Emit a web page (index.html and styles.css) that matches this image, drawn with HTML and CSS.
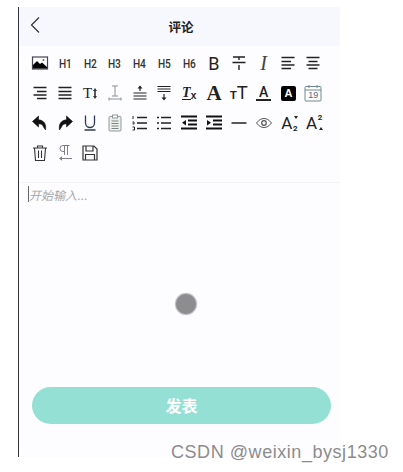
FILE: index.html
```html
<!DOCTYPE html>
<html lang="zh-CN">
<head>
    <meta charset="UTF-8">
    <meta name="viewport" content="width=device-width, initial-scale=1.0">
    <title>评论</title>
    <link rel="stylesheet" href="styles.css">
</head>
<body>
    <div class="phone">
        <div class="nav-bar">
            <svg class="nav-back" width="12" height="18" viewBox="0 0 12 18"><path d="M10 1.5 2.5 9l7.5 7.5" fill="none" stroke="#333" stroke-width="1.2"/></svg>
            <div class="nav-title">评论</div>
        </div>

        <div class="toolbar">
            <!-- Row 1 -->
            <div class="tool"><svg width="18" height="18" viewBox="0 0 18 18"><rect x="1.5" y="3" width="15" height="12" fill="#fff" stroke="#445" stroke-width="1.2"/><path d="M2 14.5V11l4-4 3 3 2-1.500 5 4.500v1.500z" fill="#000"/><circle cx="12.500" cy="6" r="1" fill="#667"/></svg></div>
            <div class="tool tool-h">H1</div>
            <div class="tool tool-h">H2</div>
            <div class="tool tool-h">H3</div>
            <div class="tool tool-h">H4</div>
            <div class="tool tool-h">H5</div>
            <div class="tool tool-h">H6</div>
            <div class="tool tool-b">B</div>
            <div class="tool"><svg width="18" height="18" viewBox="0 0 18 18"><path d="M3 3h12M9 3v3M2.5 8.5h13M9 11v5" fill="none" stroke="#222" stroke-width="1.4"/></svg></div>
            <div class="tool tool-i">I</div>
            <div class="tool"><svg width="18" height="18" viewBox="0 0 18 18"><path d="M2.5 3.5h13M2.5 7.5h9.5M2.5 11h13M2.5 14.5h9.5" fill="none" stroke="#222" stroke-width="1.5"/></svg></div>
            <div class="tool"><svg width="18" height="18" viewBox="0 0 18 18"><path d="M2.5 3.5h13M4.5 7.5h9M2.5 11h13M4.5 14.5h9" fill="none" stroke="#222" stroke-width="1.5"/></svg></div>

            <!-- Row 2 -->
            <div class="tool"><svg width="18" height="18" viewBox="0 0 18 18"><path d="M2.5 3.5h13M6 7.5h9.5M2.5 11h13M6 14.5h9.5" fill="none" stroke="#222" stroke-width="1.5"/></svg></div>
            <div class="tool"><svg width="18" height="18" viewBox="0 0 18 18"><path d="M2.5 3.5h13M2.5 7.5h13M2.5 11h13M2.5 14.5h13" fill="none" stroke="#222" stroke-width="1.5"/></svg></div>
            <div class="tool tool-size">T<svg width="4" height="11" viewBox="0 0 4 11"><path d="M2 0 4 3H2.800v5H4l-2 3-2-3h1.200V3H0z" fill="#333"/></svg></div>
            <div class="tool"><svg width="18" height="18" viewBox="0 0 18 18"><path d="M6 2h6M6 12h6M9 2v10M3 15h12M3 13.5V16.5M15 13.5V16.5" fill="none" stroke="#8a8f98" stroke-width="1"/></svg></div>
            <div class="tool"><svg width="18" height="18" viewBox="0 0 18 18"><path d="M9 7V2.5M2.5 9h13M2.5 12h13M2.5 15h13" fill="none" stroke="#222" stroke-width="1.2"/><path d="M6.5 4.5 9 1.5l2.500 3z" fill="#222"/></svg></div>
            <div class="tool"><svg width="18" height="18" viewBox="0 0 18 18"><path d="M2.5 2.5h13M2.5 5h13M2.5 7.5h13M9 10v5" fill="none" stroke="#222" stroke-width="1.2"/><path d="M6.5 13.5 9 16.5l2.500-3z" fill="#222"/></svg></div>
            <div class="tool tool-clear"><span class="tool-clear-t">T</span><span class="tool-clear-x">x</span></div>
            <div class="tool tool-serif">A</div>
            <div class="tool tool-tt"><span class="tool-tt-small">T</span>T</div>
            <div class="tool"><div class="tool-under">A</div></div>
            <div class="tool"><div class="tool-invert">A</div></div>
            <div class="tool"><svg width="18" height="18" viewBox="0 0 18 18"><rect x="1" y="2.5" width="16" height="14.5" rx="1" fill="#fff" stroke="#6f8a90" stroke-width="1"/><path d="M1 6h16M5 1v3M13 1v3" fill="none" stroke="#6f8a90" stroke-width="1"/></svg><span class="tool-date">19</span></div>

            <!-- Row 3 -->
            <div class="tool"><svg width="18" height="18" viewBox="0 0 18 18"><path d="M7.5 2 1.5 7.5l6 5.500V9.800c2.800 0 4.300 1.200 5 3.200l2 3c1-5.800-1.500-9.700-7-10.200z" fill="#111" stroke="#111" stroke-width=".6"/></svg></div>
            <div class="tool"><svg width="18" height="18" viewBox="0 0 18 18"><path d="M10.5 2l6 5.500-6 5.500V9.800c-2.800 0-4.300 1.200-5 3.200l-2 3c-1-5.800 1.500-9.700 7-10.200z" fill="#111" stroke="#111" stroke-width=".6"/></svg></div>
            <div class="tool"><svg width="18" height="18" viewBox="0 0 18 18"><path d="M4.5 1.5v7.500a4.500 4.500 0 0 0 9 0V1.5M3.5 16h11" fill="none" stroke="#2b3a55" stroke-width="1.3"/></svg></div>
            <div class="tool"><svg width="18" height="18" viewBox="0 0 18 18"><rect x="3" y="2.5" width="12" height="14.5" rx="1" fill="#eef0ee" stroke="#8f9a98" stroke-width="1"/><rect x="6.5" y="1" width="5" height="3" fill="#fff" stroke="#8f9a98" stroke-width="1"/><path d="M5.5 7h7M5.5 9.500h7M5.5 12h7M5.5 14.500h7" stroke="#7c8785" stroke-width="1"/></svg></div>
            <div class="tool"><svg width="18" height="18" viewBox="0 0 18 18"><path d="M6 3.5h10M6 9h10M6 14.5h10" fill="none" stroke="#222" stroke-width="1.5"/><path d="M2 2v3M1.500 8h1.500v2H1.500M1.500 13h2v3h-2" fill="none" stroke="#222" stroke-width="1"/></svg></div>
            <div class="tool"><svg width="18" height="18" viewBox="0 0 18 18"><path d="M6 3.5h10M6 9h10M6 14.5h10M2 3.5h2M2 9h2M2 14.5h2" fill="none" stroke="#222" stroke-width="1.5"/></svg></div>
            <div class="tool"><svg width="18" height="18" viewBox="0 0 18 18"><path d="M1 2.5h16M8 6.5h9M8 10.5h9M1 14.5h16" fill="none" stroke="#111" stroke-width="2.2"/><path d="M6 6v5.500L2 8.700z" fill="#111"/></svg></div>
            <div class="tool"><svg width="18" height="18" viewBox="0 0 18 18"><path d="M1 2.5h16M8 6.5h9M8 10.5h9M1 14.5h16" fill="none" stroke="#111" stroke-width="2.2"/><path d="M2 6v5.500l4-2.800z" fill="#111"/></svg></div>
            <div class="tool"><svg width="18" height="18" viewBox="0 0 18 18"><path d="M1.5 9h15" stroke="#222" stroke-width="1.5"/></svg></div>
            <div class="tool"><svg width="18" height="18" viewBox="0 0 18 18"><path d="M1.5 9C4 5.800 6.300 4.500 9 4.500s5 1.300 7.500 4.500C14 12.200 11.700 13.500 9 13.500S4 12.200 1.500 9z" fill="none" stroke="#555" stroke-width="1"/><circle cx="9" cy="9" r="2.3" fill="none" stroke="#555" stroke-width="1.2"/></svg></div>
            <div class="tool tool-script">A<span class="tool-sub">2</span><i class="tool-arrow-down"></i></div>
            <div class="tool tool-script">A<span class="tool-sup">2</span><i class="tool-arrow-up"></i></div>

            <!-- Row 4 -->
            <div class="tool"><svg width="18" height="18" viewBox="0 0 18 18"><path d="M2 4h14M6.500 4V2h5v2M3.500 4l1 12.500h9l1-12.500M7.500 6.500v7.500M10.500 6.500v7.500" fill="none" stroke="#333" stroke-width="1.1"/></svg></div>
            <div class="tool"><svg width="18" height="18" viewBox="0 0 18 18"><path d="M13.500 1.500H7a3 3 0 0 0 0 6h1.500M8.500 1.500V11M11.500 1.500V11M16 14.500H4" fill="none" stroke="#7c8288" stroke-width="1"/><path d="M6 12.300 3 14.500l3 2.200z" fill="#7c8288"/></svg></div>
            <div class="tool"><svg width="18" height="18" viewBox="0 0 18 18"><path d="M2 2h11l3 3v11H2zM5 2v5h7V2M4.500 16v-5.500h9V16" fill="none" stroke="#333" stroke-width="1.2"/></svg></div>
        </div>

        <div class="editor">
            <div class="editor-text"><span class="caret"></span>开始输入...</div>
        </div>
        <div class="touch-dot"></div>
        <button class="submit-btn">发表</button>
    </div>
    <div class="watermark">CSDN @weixin_bysj1330</div>
</body>
</html>
```

FILE: styles.css
```css
html, body {
    margin: 0;
    padding: 0;
    background: #fff;
}
body {
    font-family: "Noto Sans CJK SC", "Liberation Sans", sans-serif;
    width: 403px;
    height: 472px;
    overflow: hidden;
    position: relative;
}
.phone {
    position: relative;
    display: flex;
    flex-direction: column;
    box-sizing: border-box;
    width: 322px;
    height: 450px;
    margin: 7px 0 0 18px;
    border-left: 1px solid #33333d;
    background: #fdfdff;
}
.nav-bar {
    position: relative;
    display: flex;
    align-items: center;
    justify-content: center;
    height: 39px;
    padding-left: 3px;
    box-sizing: border-box;
    background: #f7f8fe;
}
.nav-back {
    position: absolute;
    left: 10px;
    top: 9px;
}
.nav-title {
    font-size: 12.5px;
    font-weight: 700;
    color: #222;
}
.toolbar {
    display: grid;
    grid-template-columns: repeat(12, 24.8px);
    grid-auto-rows: 30px;
    padding: 2px 0 14px 9px;
    border-bottom: 1px solid #f3f3f6;
}
.tool {
    position: relative;
    display: flex;
    align-items: center;
    justify-content: center;
    color: #222;
}
.tool-h {
    font-family: "Roboto", sans-serif;
    font-size: 13px;
    font-weight: 500;
    color: #333;
    transform: scaleX(0.78);
}
.tool-b {
    font-family: "Roboto", sans-serif;
    font-size: 18px;
    font-weight: 400;
}
.tool-i {
    font-family: "Liberation Serif", serif;
    font-size: 20px;
    font-style: italic;
    color: #444;
}
.tool-size {
    gap: 1px;
    font-family: "Liberation Serif", serif;
    font-size: 15px;
}
.tool-clear {
    font-family: "Liberation Serif", serif;
    font-size: 14px;
    font-weight: 700;
    font-style: italic;
}
.tool-clear-t {
    border-bottom: 1.5px solid #222;
    line-height: 12px;
}
.tool-clear-x {
    font-family: "Liberation Sans", sans-serif;
    font-size: 10px;
    font-style: normal;
    margin-top: 4px;
}
.tool-serif {
    font-family: "Liberation Serif", serif;
    font-size: 21px;
    font-weight: 700;
}
.tool-tt {
    align-items: flex-end;
    height: 18px;
    margin: auto 0;
    font-family: "Liberation Sans", sans-serif;
    font-size: 18px;
    line-height: 18px;
    font-weight: 400;
}
.tool-tt-small {
    font-size: 11px;
    font-weight: 700;
    line-height: 13px;
}
.tool-under {
    width: 15px;
    height: 14px;
    border-bottom: 2px solid #222;
    font-family: "Roboto", sans-serif;
    font-size: 14px;
    font-weight: 500;
    line-height: 14px;
    text-align: center;
}
.tool-invert {
    display: flex;
    align-items: center;
    justify-content: center;
    width: 15px;
    height: 15px;
    border-radius: 2px;
    background: #000;
    color: #fff;
    font-family: "Liberation Sans", sans-serif;
    font-size: 11px;
    font-weight: 700;
}
.tool-date {
    position: absolute;
    top: 12px;
    left: 0;
    right: 0;
    text-align: center;
    font-family: "Liberation Sans", sans-serif;
    font-size: 9px;
    line-height: 10px;
    color: #567;
}
.tool-script {
    font-family: "Roboto", sans-serif;
    font-size: 17px;
    font-weight: 400;
    padding-right: 3px;
    box-sizing: border-box;
}
.tool-sub, .tool-sup {
    position: absolute;
    left: 17px;
    font-size: 8px;
    font-weight: 700;
    line-height: 8px;
}
.tool-sub {
    top: 17px;
}
.tool-sup {
    top: 6px;
}
.tool-arrow-down, .tool-arrow-up {
    position: absolute;
    left: 18px;
    width: 0;
    height: 0;
    border-left: 2.5px solid transparent;
    border-right: 2.5px solid transparent;
}
.tool-arrow-down {
    top: 8px;
    border-top: 3px solid #222;
}
.tool-arrow-up {
    top: 19px;
    border-bottom: 3px solid #222;
}
.editor {
    flex: 1;
    padding: 3px 9px;
}
.editor-text {
    display: flex;
    align-items: center;
    height: 16px;
    font-size: 12px;
    font-style: italic;
    color: #a5a5a8;
}
.caret {
    width: 1px;
    height: 16px;
    background: #666;
}
.touch-dot {
    position: absolute;
    left: 157px;
    top: 287px;
    width: 20px;
    height: 20px;
    border-radius: 50%;
    background: #8d8d8f;
    box-shadow: 0 0 1px 1px #b4b4bc;
}
.submit-btn {
    display: block;
    width: 299px;
    height: 37px;
    margin: 0 0 33px 13px;
    padding: 0 0 2px;
    border: none;
    border-radius: 19px;
    background: #95e0d5;
    color: #fff;
    font-family: inherit;
    font-size: 16px;
    font-weight: 700;
}
.watermark {
    position: absolute;
    left: 171px;
    top: 442px;
    font-family: "Liberation Sans", sans-serif;
    font-size: 18px;
    letter-spacing: 0.55px;
    line-height: 20px;
    color: #8c8c8c;
    white-space: nowrap;
}
```
